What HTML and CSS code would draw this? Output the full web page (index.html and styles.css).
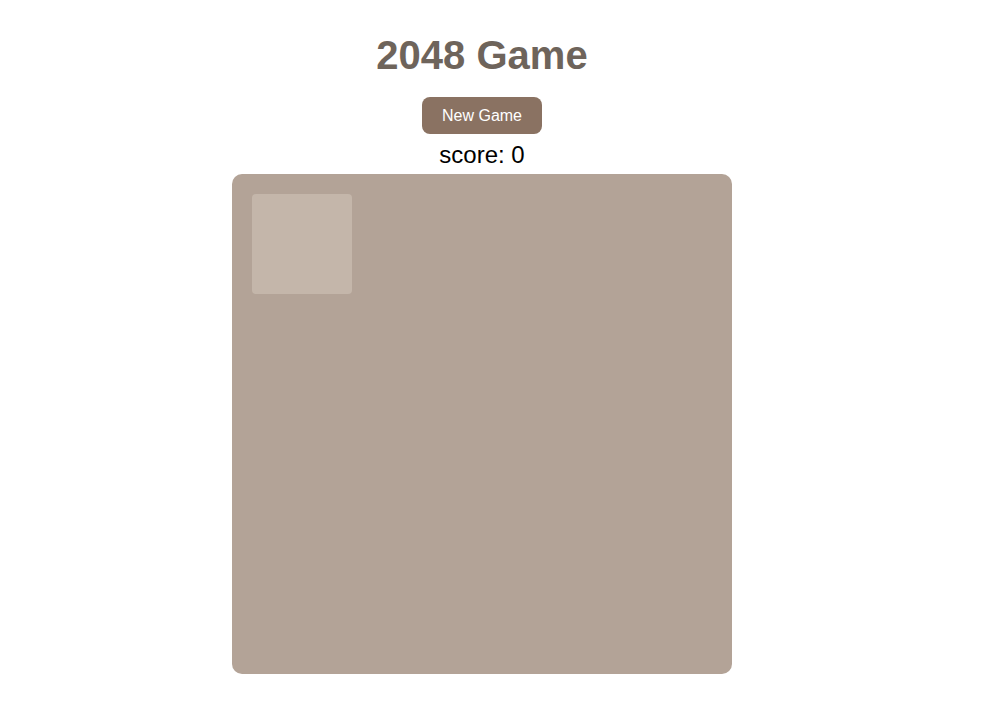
FILE: index.html
```html
<!DOCTYPE html>
<html>
<head>
<meta charset="utf-8">
<link rel="stylesheet" href="styles.css">
</head>
<body>
<div class="app">
  <h1 class="title">2048 Game</h1>
  <button class="new-game">New Game</button>
  <div class="score">score: 0</div>
  <div class="board">
    <div class="tile"></div>
  </div>
</div>
</body>
</html>
```
FILE: styles.css
```css
html, body {
  margin: 0;
  padding: 0;
  background: #ffffff;
  font-family: "Liberation Sans", Arial, sans-serif;
}
.app {
  display: flex;
  flex-direction: column;
  align-items: center;
  padding-top: 32px;
  padding-right: 24px;
}
.title {
  margin: 0;
  font-size: 40px;
  line-height: 46px;
  font-weight: bold;
  color: #6e645b;
}
.new-game {
  margin-top: 19px;
  width: 120px;
  height: 37px;
  border: none;
  border-radius: 8px;
  background: #8a7262;
  color: #ffffff;
  font-family: "Liberation Sans", Arial, sans-serif;
  font-size: 16px;
  padding: 0;
}
.score {
  margin-top: 7px;
  font-size: 24px;
  line-height: 27px;
  color: #000000;
}
.board {
  margin-top: 6px;
  width: 500px;
  height: 500px;
  box-sizing: border-box;
  padding: 20px;
  border-radius: 10px;
  background: #b3a397;
}
.tile {
  width: 100px;
  height: 100px;
  border-radius: 4px;
  background: #c4b6aa;
}
```
